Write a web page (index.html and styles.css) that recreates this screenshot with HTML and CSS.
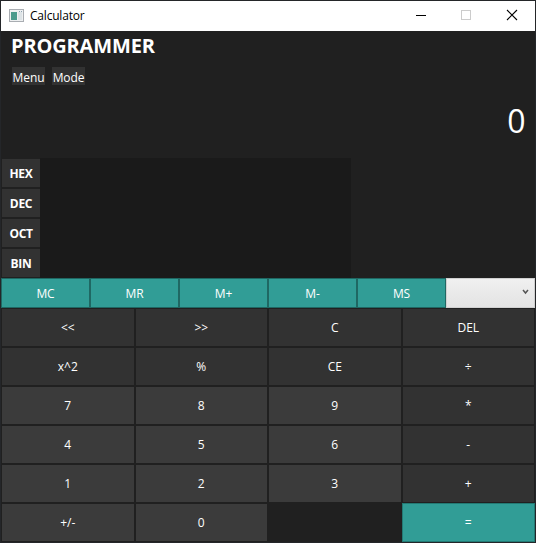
FILE: index.html
```html
<!DOCTYPE html>
<html lang="en">
<head>
<meta charset="utf-8">
<title>Calculator</title>
<link rel="stylesheet" href="styles.css">
</head>
<body>
<div class="window">
  <header class="titlebar">
    <svg class="app-icon" width="16" height="14" viewBox="0 0 16 14">
      <rect x=".5" y=".5" width="14" height="12" fill="#eef0f1" stroke="#a9adb2"/>
      <rect x="2" y="3" width="6" height="8" fill="#4b9a8c"/>
      <rect x="9" y="3" width="4" height="8" fill="#dde3e6"/>
      <path d="M10 2.500h1M12 2.500h1" stroke="#8aa0b0"/>
    </svg>
    <span class="caption">Calculator</span>
    <svg class="controls" width="138" height="30" viewBox="0 0 138 30" fill="none">
      <path d="M19 14.500h10" stroke="#000"/>
      <rect x="64.500" y="9.500" width="9" height="9" stroke="#ccc"/>
      <path d="M110 9l10 10M120 9l-10 10" stroke="#000" stroke-width="1.100"/>
    </svg>
  </header>
  <main class="calculator">
    <h1 class="mode-title">PROGRAMMER</h1>
    <nav class="menus"><button>Menu</button><button>Mode</button></nav>
    <output class="result">0</output>
    <section class="bases">
      <div class="base-buttons">
        <button>HEX</button><button>DEC</button><button>OCT</button><button>BIN</button>
      </div>
      <div class="base-values"></div>
    </section>
    <section class="memory">
      <button>MC</button><button>MR</button><button>M+</button><button>M-</button><button>MS</button>
      <div class="combo"><svg width="7" height="6" viewBox="0 0 7 6" fill="none"><path d="M1 1l2.500 3L6 1" stroke="#555" stroke-width="1.500"/></svg></div>
    </section>
    <section class="keypad">
      <button>&lt;&lt;</button><button>&gt;&gt;</button><button>C</button><button>DEL</button>
      <button>x^2</button><button>%</button><button>CE</button><button>÷</button>
      <button class="digit">7</button><button class="digit">8</button><button class="digit">9</button><button>*</button>
      <button class="digit">4</button><button class="digit">5</button><button class="digit">6</button><button>-</button>
      <button class="digit">1</button><button class="digit">2</button><button class="digit">3</button><button>+</button>
      <button class="digit">+/-</button><button class="digit">0</button><span></span><button class="equals">=</button>
    </section>
  </main>
</div>
</body>
</html>
```
FILE: styles.css
```css
* { box-sizing: border-box; }
body { margin: 0; background: #202020; font: 12px/16px "Open Sans", "Noto Sans", sans-serif; color: #fff; }
button { margin: 0; padding: 2px 0 0; border: 0; border-radius: 0; font: inherit; color: inherit; background: #323232; }
.window { width: 536px; height: 543px; border: 1px solid #242629; display: flex; flex-direction: column; }
.titlebar { height: 30px; flex: none; background: #fff; color: #000; display: flex; align-items: center; padding-left: 8px; }
.caption { margin-left: 5px; letter-spacing: -0.2px; }
.controls { margin-left: auto; }
.calculator { flex: 1; display: flex; flex-direction: column; background: #202020; }
.mode-title { margin: 0; padding-left: 10px; height: 36px; font-size: 20px; line-height: 30px; font-weight: 700; letter-spacing: -0.15px; }
.menus { display: flex; gap: 7px; padding-left: 11px; height: 18px; }
.menus button { width: 33px; height: 18px; line-height: 18px; letter-spacing: -0.1px; }
.result { height: 73px; padding: 18px 10px 0 0; text-align: right; font-size: 32px; line-height: 36px; letter-spacing: -0.5px; }
.bases { display: flex; height: 120px; }
.base-buttons { width: 39px; display: grid; grid-template-rows: repeat(4, 1fr); }
.base-buttons button { border: 1px solid #202020; border-right: 0; font-weight: 700; letter-spacing: -0.3px; }
.base-values { width: 311px; background: #1a1a1a; }
.memory { display: grid; grid-template-columns: repeat(6, 1fr); height: 30px; }
.memory button { background: #319d96; border: 1px solid #1f6863; letter-spacing: -0.2px; }
.combo { display: flex; justify-content: flex-end; align-items: center; padding: 0 5px 3px 0; border: 1px solid #d0d0d0; background: linear-gradient(#f0f0f0, #e3e3e3); }
.keypad { flex: 1; display: grid; grid-template-columns: repeat(4, 1fr); grid-template-rows: repeat(6, 39px); }
.keypad button { padding: 0; border: 1px solid #202020; }
.keypad .digit { background: #3b3b3b; }
.keypad .equals { background: #319d96; border-color: #237a74; }
```
